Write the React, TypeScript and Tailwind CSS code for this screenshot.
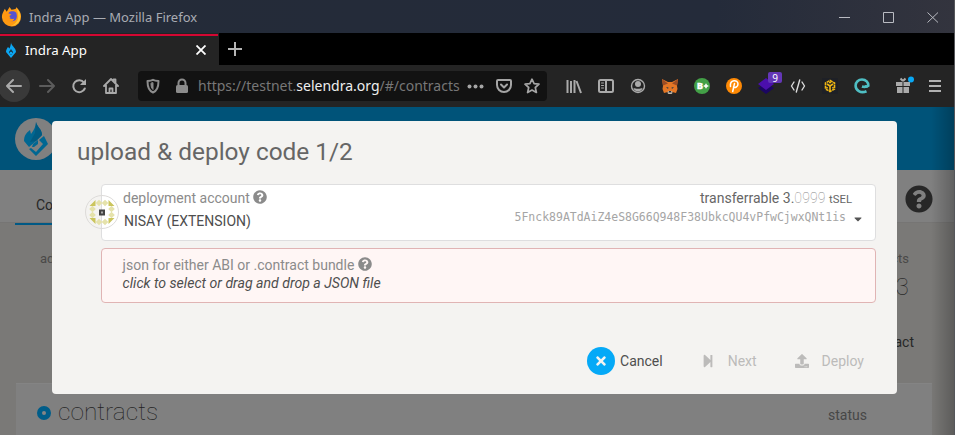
import type { ReactNode } from "react";
import { FaCaretDown, FaQuestionCircle, FaStepForward, FaTimes, FaUpload } from "react-icons/fa";

function Icon({ children, className = "" }: { children: ReactNode; className?: string }) {
  return (
    <svg viewBox="0 0 16 16" fill="none" stroke="currentColor" strokeWidth="2" strokeLinecap="round" strokeLinejoin="round" className={`size-4 shrink-0 ${className}`}>
      {children}
    </svg>
  );
}

function FirefoxLogo() {
  return (
    <svg viewBox="0 0 22 22" className="ml-px size-[21px] shrink-0">
      <path d="M2 7 4 3l2 3 3-5 2 3c5-1 5-1 5-3 3 3 5 6 5 10a10 10 0 0 1-20 1c0-2 0-3 1-5Z" fill="#ff9a12" />
      <path d="M16 2c4 4 5 7 4 12-1 4-5 7-10 7 5-2 8-5 8-10 0-4-1-6-2-9Z" fill="#ffc332" />
      <path d="M8 7c2-2 6-2 8 0 1 3 1 6-1 8-3 2-7 1-8-2l3-1-3-3 1-2Z" fill="#5553d0" />
      <path d="M4 7c3 0 5 1 7 2l-3 2c1 3 4 3 6 2-1 4-7 5-9 1-2-2-2-5-1-7Z" fill="#ff9612" />
    </svg>
  );
}

function TitleBar() {
  return (
    <div className="flex h-[33px] items-center bg-[linear-gradient(90deg,#242b38,#242b3a_75%,#33343e)] text-[#a9acb3]">
      <FirefoxLogo />
      <span className="ml-[7px] text-[13px] leading-5">Indra App — Mozilla Firefox</span>
      <svg viewBox="0 0 100 12" className="mr-[16px] ml-auto h-3 w-[100px]" fill="none" stroke="#b9bbc2" strokeWidth="1">
        <path d="M0 6.500h11M44.500 1.500h10v10h-10zM88.500 1.500l10.500 10M99 1.500 88.500 11.500" />
      </svg>
    </div>
  );
}

function TabStrip() {
  return (
    <div className="flex h-8 bg-black">
      <div className="relative flex w-[219px] items-center bg-[#242424] text-white">
        <div className="absolute top-px right-px left-0 h-[2px] bg-[#d40733]" />
        <svg viewBox="0 0 12 16" className="mt-[2px] ml-[5px] h-4 w-3">
          <path d="M6 0c0 4 5 5.500 5 10l-5 6-5-6c0-2 1-4 2-5l1.500 1.500C5.500 4 6 2 6 0Z" fill="#0ca7f2" />
          <path d="m6 7 2.200 3L6 13l-2.200-3z" fill="#164158" /><path d="M5 10h2v2H5z" fill="#0ca7f2" />
        </svg>
        <span className="mt-[2px] ml-2 text-[13.3px] leading-5">Indra App</span>
        <svg viewBox="0 0 10 10" className="mt-[2px] mr-[13px] ml-auto size-[10px]" fill="none" stroke="#fff" strokeWidth="1.800">
          <path d="m.5.5 9 9m0-9-9 9" />
        </svg>
      </div>
      <svg viewBox="0 0 14 14" className="mt-[9px] ml-[9px] size-[14px]" fill="none" stroke="#b5b5b5" strokeWidth="2">
        <path d="M7 0v14M0 7h14" />
      </svg>
    </div>
  );
}

function AddressBar() {
  return (
    <div className="ml-[19px] flex h-[30px] w-[409px] shrink-0 items-center rounded bg-[#121212] text-[#8c8c8c]">
      <Icon className="ml-[7px]">
        <path d="M8 1.800C6 2.800 4 2.900 2.500 3c0 5 .5 9.500 5.500 11.500 5-2 5.500-6.500 5.500-11.500C12 2.900 10 2.800 8 1.800Z" />
        <path d="M6 5.500c0 3 .4 4.500 2 6V5Z" fill="currentColor" strokeWidth="1" />
      </Icon>
      <svg viewBox="0 0 14 16" className="ml-[14px] h-4 w-[14px]">
        <rect x="1" y="7" width="12" height="8" rx="1.500" fill="currentColor" />
        <path d="M3.500 7V5a3.500 3.500 0 0 1 7 0v2" fill="none" stroke="currentColor" strokeWidth="2" />
      </svg>
      <span className="ml-[9px] w-[264px] text-[14px] leading-5 whitespace-nowrap text-[#777]">
        https://testnet.<span className="text-[#eee]">selendra.org</span>/#/contracts
      </span>
      <svg viewBox="0 0 17 5" className="ml-[5px] h-[5px] w-[17px]" fill="#a5a5a5">
        <circle cx="2.500" cy="2.500" r="2" /><circle cx="8.500" cy="2.500" r="2" /><circle cx="14.500" cy="2.500" r="2" />
      </svg>
      <Icon className="ml-[12px] text-[#a5a5a5]">
        <path d="M2 2h12a1 1 0 0 1 1 1v4a7 7 0 0 1-14 0V3a1 1 0 0 1 1-1ZM5 6.500l3 3 3-3" />
      </Icon>
      <Icon className="ml-[12px] text-[#a5a5a5]">
        <path d="m8 1.200 2.100 4.500 4.900.5-3.700 3.300 1.100 5L8 12l-4.400 2.500 1.100-5L1 6.200l4.900-.5Z" strokeWidth="1.700" />
      </Icon>
    </div>
  );
}

function Extensions() {
  return (
    <div className="ml-[19px] flex items-center gap-4 text-[#aaa]">
      <Icon><path d="M1.500 2v13M5 3v12M8.500 2v13M10.500 3l4.500 12" strokeLinecap="butt" /></Icon>
      <Icon>
        <rect x="1" y="2" width="14" height="12" rx="1.500" />
        <path d="M8 2v12" /><path d="M3.500 5h2M3.500 7.500h2M3.500 10h2" strokeWidth="1" />
      </Icon>
      <Icon>
        <circle cx="8" cy="8" r="6.500" strokeWidth="1.400" />
        <circle cx="8" cy="6" r="3" fill="currentColor" stroke="none" />
        <path d="M3.500 10c2 1 7 1 9 0-.5 4.500-8.500 4.500-9 0Z" fill="currentColor" stroke="none" />
      </Icon>
      <svg viewBox="0 0 16 16" className="size-4">
        <path d="m0 1 6 3h4l6-3-1 7 .5 3-1.500 4-4-1-1 1H7l-1-1-4 1-1.500-4L1 8Z" fill="#e47725" />
        <path d="m0 1 6 4.500-5 2ZM16 1l-6 4.500 5 2Z" fill="#9c4d25" />
        <path d="m4 9 2.500.5-.5 1.500Zm8 0-2.500.5.5 1.500Z" fill="#26384b" />
        <path d="M6 13h4l.5 2-1 1h-3l-1-1Z" fill="#c9bbaa" /><path d="M7 13h2l.5 1.500h-3Z" fill="#232b35" />
      </svg>
      <svg viewBox="0 0 16 16" className="size-4">
        <circle cx="8" cy="8" r="8" fill="#43a047" />
        <text x="2.700" y="11.400" fontSize="9.500" fontWeight="800" fill="#fff" stroke="#fff" strokeWidth=".3">B</text>
        <path d="M9.700 8h4.600M12 5.700v4.600" stroke="#fff" strokeWidth="1.500" />
      </svg>
      <svg viewBox="0 0 16 16" className="size-4">
        <circle cx="8" cy="8" r="8" fill="#ff8a05" />
        <path d="M6.700 13.500 8.500 5.500M4.500 8.500C3.500 1.500 12 1 12 6c0 3-3 4-4.500 3" fill="none" stroke="#fff" strokeWidth="1.500" strokeLinecap="round" />
      </svg>
      <div className="relative size-4">
        <svg viewBox="0 0 16 16" className="size-4">
          <path d="m8 5 8 5-8 6-8-6Z" fill="#1b0662" /><path d="m8 0 8 6-8 6-8-6Z" fill="#4b0fac" />
        </svg>
        <span className="absolute -top-[6px] left-[10px] flex h-[11px] w-[14px] items-center justify-center rounded-[2px] bg-[#6437b7] text-[10px] leading-none text-white">9</span>
      </div>
      <Icon className="text-[#ddd]"><path d="M4 4 1.500 8 4 12M12 4l2.500 4-2.500 4M9.700 2l-3.400 12" strokeWidth="1.400" /></Icon>
      <svg viewBox="0 0 16 16" className="size-4 bg-[#1e2026]" fill="none" stroke="#edb513" strokeWidth="1.600">
        <path d="m8 2.500 4.500 2.500v6L8 13.500 3.500 11V5Z" strokeDasharray="3 .6" />
        <path d="m5 6 3 2 3-2M8 8v5M7 4.500h2M5 9v1.500M11 9v1.500" />
      </svg>
      <svg viewBox="0 0 16 16" className="size-4">
        <path d="M12.500 13.200C6.500 16 1.600 12 1.600 7.800 1.600 4 4.500 1.500 8 1.500c4 0 6.500 3 6.300 6.200-1.800 1.300-4.300 1.200-6.300.8" fill="none" stroke="#4fbfc4" strokeWidth="2.600" />
        <path d="M7 9.500c2-.2 3.500-1 4.500-2.500l3.500 1.500c-2 2-5 2-8 1Z" fill="#4fbfc4" />
      </svg>
      <svg viewBox="0 0 19 18" className="-mt-[2px] ml-[10px] h-[18px] w-[19px] shrink-0">
        <path d="M0 6h6.500v4H0zm7.500 0H14v4H7.500zM1 11h5.500v6H1zm6.500 0H13v6H7.500z" fill="#aaa" />
        <path d="M7 5 4.500 2.500M7 5l2.500-2.500" stroke="#aaa" strokeWidth="2" />
        <circle cx="15" cy="3.500" r="3" fill="#08a8f5" />
      </svg>
      <svg viewBox="0 0 12 12" className="-ml-[2px] size-3" stroke="#b1b1b1" strokeWidth="2"><path d="M0 1h12M0 6h12M0 11h12" /></svg>
    </div>
  );
}

function Toolbar() {
  return (
    <div className="flex h-[42px] items-center overflow-hidden bg-[#242424] text-[#aaa]">
      <div className="-ml-[2px] flex size-8 shrink-0 items-center justify-center rounded-full bg-[#393939]">
        <Icon><path d="M15 8H1m6-6L1 8l6 6" /></Icon>
      </div>
      <Icon className="ml-[9px] text-[#5c5c5c]"><path d="M1 8h14M9 2l6 6-6 6" /></Icon>
      <Icon className="ml-4"><path d="M13.800 10.500A6 6 0 1 1 13 4.500" /><path d="M15 1v6H9l2-2.200 2-1.800Z" fill="currentColor" stroke="none" /></Icon>
      <Icon className="ml-4"><path d="m1 8 7-7 7 7M3 7v8h10V7M6.500 15v-4.500h3V15M10.500 3V1.500h2V5" strokeWidth="1.800" /></Icon>
      <AddressBar />
      <Extensions />
    </div>
  );
}

function IndraLogo() {
  return (
    <div className="ml-[15px] flex size-[42px] items-center justify-center rounded-full bg-[#808080]">
      <svg viewBox="0 0 26 34" className="h-[34px] w-[26px]">
        <path d="M13 0c1 5 6 7 6 13l-7 7-6 5-5-6c0-5 2-8 6-11l1 4c3-4 5-8 5-12Z" fill="#006792" />
        <path d="m21 14 4 8-12 12-7-7 2-1 5 4 7-8-4-4Z" fill="#006792" />
        <path d="M13 0c1 5 6 7 6 13l-6 6-6 1 5-9Z" fill="#005a81" />
        <path d="m10 22 5-4v4l-4 3h-2Z" fill="#006792" />
      </svg>
    </div>
  );
}

function Page() {
  return (
    <div className="h-[328px] bg-[#7a7977] font-[Roboto,sans-serif]">
      <div className="flex h-[63px] items-center bg-[#005379]"><IndraLogo /></div>
      <div className="flex h-[53px] justify-between border-b border-[#767574] bg-[#808080]">
        <div className="-mb-[3px] ml-[15px] flex w-[90px] items-end border-b-2 border-[#005985] pb-[8px] pl-[21px] text-[14px] leading-5 text-[#272727]">Contracts</div>
        <FaQuestionCircle className="mt-[15px] mr-[22px] size-7 text-[#272727]" />
      </div>
      <div className="flex h-[97px] justify-between text-[13px] leading-5 text-[#4a4948]">
        <div className="pt-[26px] pl-[40px]">addresses</div>
        <div className="pt-[26px] pr-[46px] text-right">contracts<div className="mt-[2px] text-[24px] leading-[32px] font-thin text-[#292929]">3</div></div>
      </div>
      <div className="flex h-[63px] justify-end pt-[12px] pr-[41px] text-[14px] leading-5 text-[#272727]">Add contract</div>
      <div className="mr-[23px] ml-4 flex h-[52px] border-t border-[#848484] bg-[#808080]">
        <div className="mt-[22px] ml-[21px] size-[14px] rounded-full border-[5px] border-[#005d89] bg-[#858585]" />
        <div className="mt-[12px] ml-[7px] text-[24.5px] leading-8 font-thin text-[#222]">contracts</div>
        <div className="mt-[21px] mr-[65px] ml-auto text-[14px] leading-5 text-[#474747]">status</div>
      </div>
    </div>
  );
}

function AccountIcon() {
  const dots = [[10, 5], [16, 5], [3.500, 11], [3.500, 17], [22.500, 11], [22.500, 17], [10, 24], [16, 24]];
  return (
    <div className="-ml-[16px] flex size-[34px] items-center justify-center rounded-full border border-[#dddbd9]">
      <svg viewBox="0 0 26 28" className="h-7 w-[26px]">
        <g fill="#e5e2ab">
          {dots.map(([x, y]) => <path key={`${x}-${y}`} d={`M${x} ${y - 3.300}l3.300 3.300-3.300 3.300-3.300-3.300z`} />)}
        </g>
        <path d="M6.500 2v6H.5ZM19.500 2v6h6ZM.5 20h6v6ZM25.500 20h-6v6Z" fill="#cbc55d" />
        <path d="M10 11.500h6v6h-6z" fill="#444" /><path d="M12 13.500h2v2h-2z" fill="#aaa" />
      </svg>
    </div>
  );
}

function DeployModal() {
  return (
    <div className="absolute top-[121px] left-[52px] h-[273px] w-[845px] rounded bg-[#f4f3f1] pr-[21px] pl-[49px] font-[Roboto,sans-serif] text-[14px] text-[#4e4e4e]">
      <h1 className="-ml-[24px] pt-[15px] text-[24.4px] leading-8 text-[#666]">upload &amp; deploy code 1/2</h1>
      <section className="mt-[16px] flex h-[57px] rounded border border-[#dededf] bg-white">
        <div className="-ml-px pt-[10px]"><AccountIcon /></div>
        <div className="ml-[4px] pt-[3px] leading-5">
          <div className="flex items-center text-[#8b8b8b]">deployment account<FaQuestionCircle className="mb-[2px] ml-[3px] size-[14px]" /></div>
          <div className="mt-[3px] ml-px text-[#4e4e4e]">NISAY (EXTENSION)</div>
        </div>
        <div className="mr-[13px] ml-auto pt-[3px] text-right leading-5">
          <div className="mr-[10px] text-[#666]">transferrable 3.<span className="font-thin tracking-[.15px] text-[#888]">0999</span> <span className="text-[11.3px]">tSEL</span></div>
          <div className="-mt-[2px] -mr-[2px] flex items-center font-['DejaVu_Sans_Mono',monospace] text-[11.48px] leading-[18px] text-[#a5a5a5]">5Fnck89ATdAiZ4eS8G66Q948F38UbkcQU4vPfwCjwxQNt1is<FaCaretDown className="mt-1 ml-[6px] size-3 text-[#555]" /></div>
        </div>
      </section>
      <section className="mt-[7px] h-[55px] rounded border border-[#e0b4b4] bg-[#fff6f5] pt-[6px] pl-[20.6px] leading-5">
        <div className="flex items-center text-[#8b8b8b]">json for either ABI or .contract bundle<FaQuestionCircle className="mb-[2px] ml-[3.5px] size-[14px]" /></div>
        <div className="-mt-[2px] text-[14.1px] italic">click to select or drag and drop a JSON file</div>
      </section>
      <div className="mt-[44px] flex h-7 items-center justify-end pr-[12px]">
        <div className="flex size-7 items-center justify-center rounded-full bg-[#05a9f7] text-[#f4f3f1]"><FaTimes className="size-[14px]" /></div>
        <span className="ml-[5px]">Cancel</span>
        <FaStepForward className="ml-[38px] size-[14px] text-[#bcbbba]" />
        <span className="ml-[13px] text-[#bcbbba]">Next</span>
        <FaUpload className="ml-[38px] size-[14px] text-[#bcbbba]" />
        <span className="ml-[13px] text-[#bcbbba]">Deploy</span>
      </div>
    </div>
  );
}

export default function App() {
  return (
    <main className="relative h-[435px] w-[955px] overflow-hidden font-['Noto_Sans',sans-serif]">
      <TitleBar />
      <TabStrip />
      <Toolbar />
      <Page />
      <div className="absolute top-[107px] right-0 h-[328px] w-6 bg-gradient-to-r from-transparent to-black/25" />
      <DeployModal />
      <div className="absolute top-0 right-0 h-full w-px bg-[#55565a]" />
    </main>
  );
}
